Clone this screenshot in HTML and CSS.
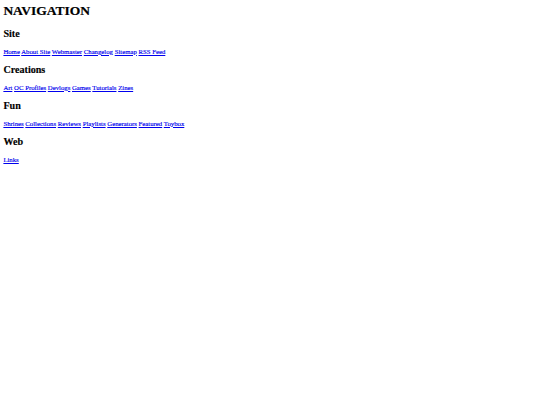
FILE: index.html
```html
<!DOCTYPE html>
<html lang="en">
<head>
<meta charset="utf-8">
<title>Navigation</title>
<link rel="stylesheet" href="styles.css">
</head>
<body class="page">
<nav class="nav">
  <h1 class="nav-title">NAVIGATION</h1>
  <section class="nav-group">
    <h2 class="nav-heading">Site</h2>
    <p class="nav-links"><a href="#">Home</a> <a href="#">About Site</a> <a href="#">Webmaster</a> <a href="#">Changelog</a> <a href="#">Sitemap</a> <a href="#">RSS Feed</a></p>
  </section>
  <section class="nav-group">
    <h2 class="nav-heading">Creations</h2>
    <p class="nav-links"><a href="#">Art</a> <a href="#">OC Profiles</a> <a href="#">Devlogs</a> <a href="#">Games</a> <a href="#">Tutorials</a> <a href="#">Zines</a></p>
  </section>
  <section class="nav-group">
    <h2 class="nav-heading">Fun</h2>
    <p class="nav-links"><a href="#">Shrines</a> <a href="#">Collections</a> <a href="#">Reviews</a> <a href="#">Playlists</a> <a href="#">Generators</a> <a href="#">Featured</a> <a href="#">Toybox</a></p>
  </section>
  <section class="nav-group">
    <h2 class="nav-heading">Web</h2>
    <p class="nav-links"><a href="#">Links</a></p>
  </section>
</nav>
</body>
</html>
```
FILE: styles.css
```css
html {
  background: #ffffff;
}
.page {
  margin: 3.375px;
  font-family: "Liberation Serif", "Times New Roman", serif;
  color: #000000;
}
.nav-title {
  font-size: 13.5px;
  line-height: 15.5px;
  font-weight: bold;
  margin: 0 0 9px 0;
  -webkit-text-stroke: 0.2px #000000;
}
.nav-heading {
  font-size: 10.125px;
  line-height: 11.6px;
  font-weight: bold;
  margin: 8.4px 0;
  -webkit-text-stroke: 0.15px #000000;
}
.nav-links {
  font-size: 6.75px;
  line-height: 7.6px;
  margin: 6.75px 0;
}
.nav-links a {
  color: #0000ee;
  text-decoration: underline;
  -webkit-text-stroke: 0.15px #0000ee;
}
```
